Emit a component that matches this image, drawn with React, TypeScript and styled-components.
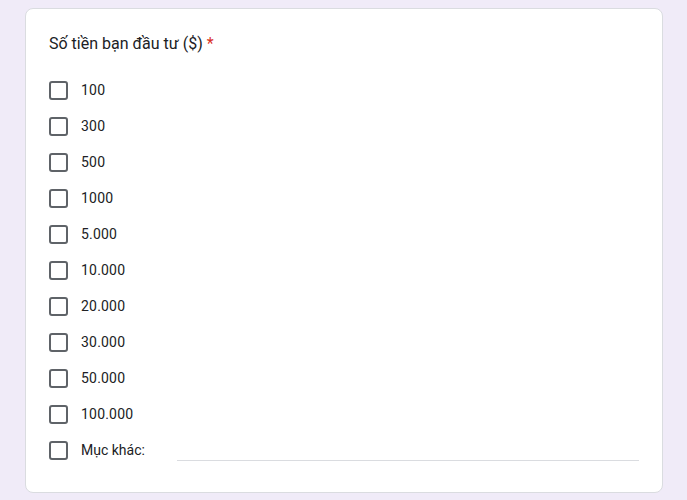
import React from "react";
import styled, { createGlobalStyle } from "styled-components";

const Global = createGlobalStyle`
  html, body { margin: 0; padding: 0; background: #f0ebf8; }
  body { font-family: Roboto, "Noto Sans", Arial, sans-serif; }
`;

const Page = styled.div`
  padding: 8px 24px 8px 25px;
  height: 500px;
  box-sizing: border-box;
`;

const Card = styled.div`
  background: #fff;
  border: 1px solid #dadce0;
  border-radius: 8px;
  padding: 23px 23px 24px 23px;
  width: 638px;
  box-sizing: border-box;
`;

const Title = styled.div`
  font-size: 16px;
  line-height: 24px;
  color: #202124;
  margin-bottom: 16px;
`;

const Star = styled.span`
  color: #d93025;
  margin-left: 4px;
`;

const List = styled.div`
  display: flex;
  flex-direction: column;
`;

const Row = styled.label`
  display: flex;
  align-items: center;
  height: 36px;
`;

const Box = styled.span`
  width: 19px;
  height: 19px;
  box-sizing: border-box;
  border: 2px solid #5f6368;
  border-radius: 3px;
  flex: none;
`;

const Text = styled.span<{ $small?: boolean }>`
  margin-left: 13px;
  font-size: 14px;
  color: #202124;
  letter-spacing: ${(p) => (p.$small ? "0" : "0.2px")};
`;

const OtherInput = styled.div`
  flex: 1;
  margin-left: 32px;
  margin-top: 20px;
  height: 1px;
  background: #dadce0;
`;

const options = ["100", "300", "500", "1000", "5.000", "10.000", "20.000", "30.000", "50.000", "100.000"];

export default function App() {
  return (
    <>
      <Global />
      <Page>
        <Card>
          <Title>
            Số tiền bạn đầu tư ($)<Star>*</Star>
          </Title>
          <List>
            {options.map((o) => (
              <Row key={o}>
                <Box />
                <Text>{o}</Text>
              </Row>
            ))}
            <Row>
              <Box />
              <Text $small>Mục khác:</Text>
              <OtherInput />
            </Row>
          </List>
        </Card>
      </Page>
    </>
  );
}
